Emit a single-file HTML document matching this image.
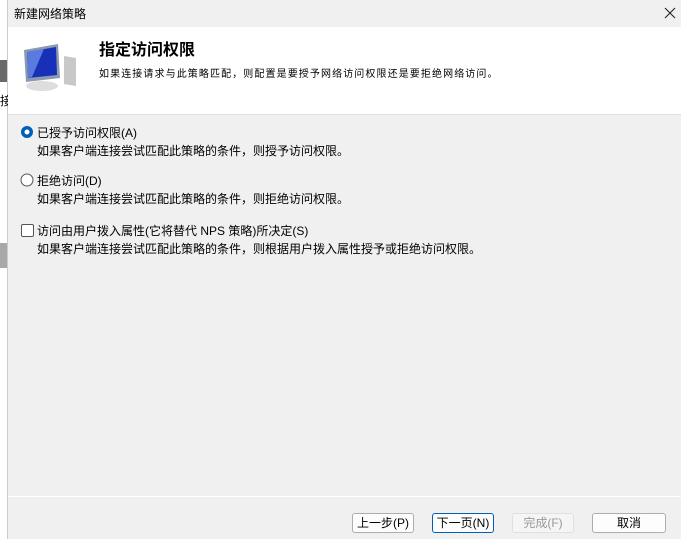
<html><head><style>
body{margin:0;width:681px;height:539px;position:relative;overflow:hidden;background:#f0f0f0;font-family:"Liberation Sans","Noto Sans CJK SC",sans-serif;font-size:12px;color:#000}
.a{position:absolute}
.btn{position:absolute;top:513px;height:18px;border:1px solid #adadad;background:#fdfdfd;border-radius:3px;font-size:12px;line-height:18px;text-align:center}
</style></head><body>
<div class="a" style="left:0;top:0;width:7px;height:539px;background:#fff;border-right:1px solid #ccc"></div>
<div class="a" style="left:0;top:60px;width:7px;height:22px;background:#6a6a6a"></div>
<div class="a" style="left:0;top:243px;width:7px;height:25px;background:#a8a8a8"></div>
<div class="a" style="left:0;top:92px;font-size:12px">接</div>
<div class="a" style="left:8px;top:0;width:673px;height:27px;background:#f0f0f0"></div>
<div class="a" style="left:14px;top:5px;font-size:12px">新建网络策略</div>
<svg class="a" style="left:664px;top:7px" width="12" height="12"><path d="M1 1L11 11M11 1L1 11" stroke="#222" stroke-width="1.1"/></svg>
<div class="a" style="left:8px;top:27px;width:673px;height:87px;background:#fff"></div>
<svg class="a" style="left:20px;top:42px" width="62" height="52">
<ellipse cx="22" cy="44" rx="16" ry="5" fill="#ddd"/>
<polygon points="4,8 38,2 40,36 6,40" fill="#8a9ab0"/>
<polygon points="7,10 36,5 37,33 8,36" fill="#1830b8"/>
<polygon points="7,10 24,7 12,35 8,36" fill="#5a7ae0"/>
<polygon points="44,14 56,16 56,44 44,42" fill="#c8c8c8"/>
</svg>
<div class="a" style="left:99px;top:36px;font-size:16px;font-weight:bold">指定访问权限</div>
<div class="a" style="left:99px;top:65px;font-size:10px;letter-spacing:1.1px">如果连接请求与此策略匹配，则配置是要授予网络访问权限还是要拒绝网络访问。</div>
<div class="a" style="left:8px;top:114px;width:673px;height:1px;background:#e0e0e0"></div>
<svg class="a" style="left:20px;top:125px" width="14" height="14"><circle cx="7" cy="7" r="6" fill="#005fb8"/><circle cx="7" cy="7" r="2.5" fill="#fff"/></svg>
<div class="a" style="left:37px;top:124px">已授予访问权限(A)</div>
<div class="a" style="left:37px;top:142px">如果客户端连接尝试匹配此策略的条件，则授予访问权限。</div>
<svg class="a" style="left:20px;top:173px" width="14" height="14"><circle cx="7" cy="7" r="6" fill="#fff" stroke="#555"/></svg>
<div class="a" style="left:37px;top:172px">拒绝访问(D)</div>
<div class="a" style="left:37px;top:190px">如果客户端连接尝试匹配此策略的条件，则拒绝访问权限。</div>
<div class="a" style="left:21px;top:224px;width:11px;height:11px;border:1px solid #555;border-radius:2px;background:#fff"></div>
<div class="a" style="left:37px;top:222px">访问由用户拨入属性(它将替代 NPS 策略)所决定(S)</div>
<div class="a" style="left:37px;top:240px">如果客户端连接尝试匹配此策略的条件，则根据用户拨入属性授予或拒绝访问权限。</div>
<div class="a" style="left:8px;top:496px;width:673px;height:1px;background:#fff"></div>
<div class="btn" style="left:352px;width:60px">上一步(P)</div>
<div class="btn" style="left:432px;width:60px;border-color:#005fb8">下一页(N)</div>
<div class="btn" style="left:512px;width:60px;color:#999;border-color:#e0e0e0;background:#f5f5f5">完成(F)</div>
<div class="btn" style="left:592px;width:72px">取消</div>
</body></html>
